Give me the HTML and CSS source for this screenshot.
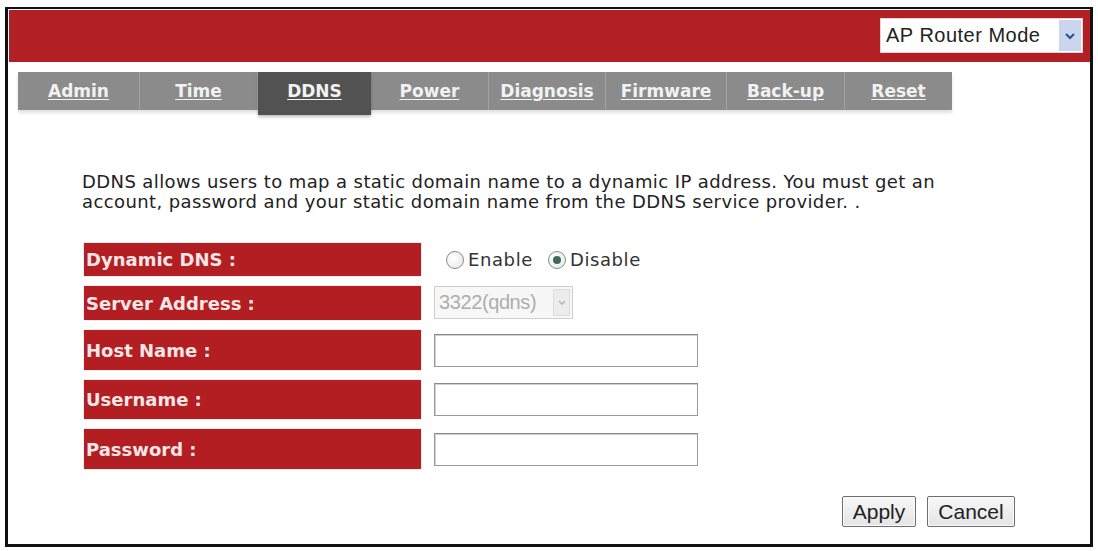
FILE: index.html
```html
<!DOCTYPE html>
<html lang="en">
<head>
<meta charset="utf-8">
<title>DDNS</title>
<link rel="stylesheet" href="styles.css">
</head>
<body>
<div class="frame">
  <header class="header">
    <div class="mode-select">
      <span class="mode-text">AP Router Mode</span>
      <span class="mode-arrow"><svg width="12" height="8" viewBox="0 0 12 8"><path d="M2 2 L6 6 L10 2" fill="none" stroke="#2b4f8f" stroke-width="2"/></svg></span>
    </div>
  </header>
  <nav class="tabs">
    <a class="tab w122">Admin</a>
    <a class="tab w118">Time</a>
    <a class="tab w113 active">DDNS</a>
    <a class="tab w118">Power</a>
    <a class="tab w117">Diagnosis</a>
    <a class="tab w121">Firmware</a>
    <a class="tab w118">Back-up</a>
    <a class="tab w107">Reset</a>
  </nav>
  <p class="desc">DDNS allows users to map a static domain name to a dynamic IP address. You must get an<br>account, password and your static domain name from the DDNS service provider. .</p>
  <div class="form">
    <div class="row h33"><div class="label">Dynamic DNS :</div>
      <div class="field">
        <span class="radio"></span><span class="radio-text">Enable</span>
        <span class="radio checked"></span><span class="radio-text">Disable</span>
      </div>
    </div>
    <div class="row h34"><div class="label">Server Address :</div>
      <div class="field">
        <div class="server-select"><span class="server-text">3322(qdns)</span><span class="server-arrow"><svg width="10" height="7" viewBox="0 0 10 7"><path d="M2 2 L5 5 L8 2" fill="none" stroke="#b8b8b8" stroke-width="1.6"/></svg></span></div>
      </div>
    </div>
    <div class="row h40"><div class="label">Host Name :</div><div class="field"><span class="text-input"></span></div></div>
    <div class="row h39"><div class="label">Username :</div><div class="field"><span class="text-input"></span></div></div>
    <div class="row h40"><div class="label">Password :</div><div class="field"><span class="text-input"></span></div></div>
  </div>
  <div class="actions">
    <button class="btn apply">Apply</button>
    <button class="btn cancel">Cancel</button>
  </div>
</div>
</body>
</html>
```
FILE: styles.css
```css
* { box-sizing: border-box; }
html, body { margin: 0; padding: 0; background: #fff; }
body { width: 1098px; height: 551px; overflow: hidden; font-family: "DejaVu Sans", Verdana, sans-serif; }

.frame {
  margin: 7px 0 0 5px;
  width: 1088px;
  height: 540px;
  border-style: solid;
  border-color: #111;
  border-width: 2px 3px 3px 3px;
  padding: 1px 0 0 1px;
}

.header {
  height: 52px;
  background: #b21f24;
  display: flex;
  justify-content: flex-end;
  align-items: flex-start;
  padding: 8px 7px 0 0;
}
.mode-select {
  width: 203px;
  height: 35px;
  background: #fff;
  border: 1px solid #d8d8d8;
  display: flex;
  align-items: center;
  padding-left: 5px;
}
.mode-text {
  flex: 1;
  font-family: "Liberation Sans", Arial, sans-serif;
  font-size: 20px;
  color: #222;
  letter-spacing: 0.5px;
}
.mode-arrow {
  width: 22px;
  height: 31px;
  margin-right: 1px;
  background: #c9d6ee;
  display: flex;
  align-items: center;
  justify-content: center;
}

.tabs {
  margin: 10px 0 0 9px;
  width: 934px;
  height: 38px;
  background: #8b8b8b;
  display: flex;
  align-items: flex-start;
  box-shadow: 0 3px 3px rgba(0,0,0,0.12);
}
.tab {
  height: 38px;
  display: flex;
  align-items: center;
  justify-content: center;
  font-family: "DejaVu Sans", Verdana, sans-serif;
  font-weight: bold;
  font-size: 17px;
  color: #f2f2f2;
  text-decoration: underline;
  text-underline-offset: 2px;
  border-right: 1px solid #a3a3a3;
}
.tab:last-child { border-right: none; }
.tab.active {
  background: #525252;
  height: 43px;
  padding-bottom: 5px;
  border-right: none;
  box-shadow: 0 2px 3px rgba(0,0,0,0.25);
}
.w107 { width: 107px; }
.w113 { width: 113px; }
.w117 { width: 117px; }
.w118 { width: 118px; }
.w121 { width: 121px; }
.w122 { width: 122px; }

.desc {
  margin: 62px 0 0 73px;
  font-size: 18px;
  line-height: 20px;
  letter-spacing: 0.4px;
  color: #222;
}

.form {
  margin: 31px 0 0 75px;
  display: flex;
  flex-direction: column;
  gap: 10px;
}
.row { display: flex; align-items: stretch; }
.h33 { height: 33px; }
.h34 { height: 34px; }
.h39 { height: 39px; }
.h40 { height: 40px; }
.label {
  width: 337px;
  background: #b21e22;
  color: #f7e6e6;
  font-weight: bold;
  font-size: 18px;
  display: flex;
  align-items: center;
  padding-left: 2px;
  box-shadow: 0 0 1px rgba(178,30,34,0.5);
}
.field {
  flex: 1;
  display: flex;
  align-items: center;
  padding-left: 13px;
}

.radio {
  width: 18px;
  height: 18px;
  border-radius: 50%;
  border: 1px solid #8a8a8a;
  background: radial-gradient(circle at 40% 40%, #ffffff 0%, #e6e6e6 100%);
  margin-left: 12px;
  margin-right: 4px;
  position: relative;
}
.radio.checked { border-color: #6f9a86; margin-left: 15px; }
.radio.checked::after {
  content: "";
  position: absolute;
  left: 4px; top: 4px;
  width: 8px; height: 8px;
  border-radius: 50%;
  background: #3f6b56;
}
.radio-text {
  font-size: 18px;
  letter-spacing: 0.6px;
  color: #333;
}

.server-select {
  width: 139px;
  height: 33px;
  border: 1px solid #cfcfcf;
  background: #f7f7f7;
  display: flex;
  align-items: center;
  padding-left: 4px;
  margin-top: -1px;
}
.server-text {
  flex: 1;
  font-family: "Liberation Sans", Arial, sans-serif;
  font-size: 20px;
  color: #aeaeae;
  letter-spacing: -0.4px;
}
.server-arrow {
  width: 17px;
  height: 27px;
  margin-right: 2px;
  background: #ececec;
  border: 1px solid #dcdcdc;
  display: flex;
  align-items: center;
  justify-content: center;
}

.text-input {
  display: block;
  width: 264px;
  height: 33px;
  background: #fff;
  border: 1px solid #9a9a9a;
  border-top-color: #8a8a8a;
  box-shadow: inset 1px 1px 0 #d0d0d0;
}

.actions {
  margin: 27px 75px 0 0;
  display: flex;
  justify-content: flex-end;
  gap: 11px;
}
.btn {
  height: 31px;
  font-family: "Liberation Sans", Arial, sans-serif;
  font-size: 21px;
  color: #222;
  background: linear-gradient(#f8f8f8, #e4e4e4);
  border: 1px solid #6e6e6e;
  border-radius: 2px;
  box-shadow: inset 0 0 0 1px #fafafa;
  padding: 0;
}
.apply { width: 74px; }
.cancel { width: 88px; }
```
